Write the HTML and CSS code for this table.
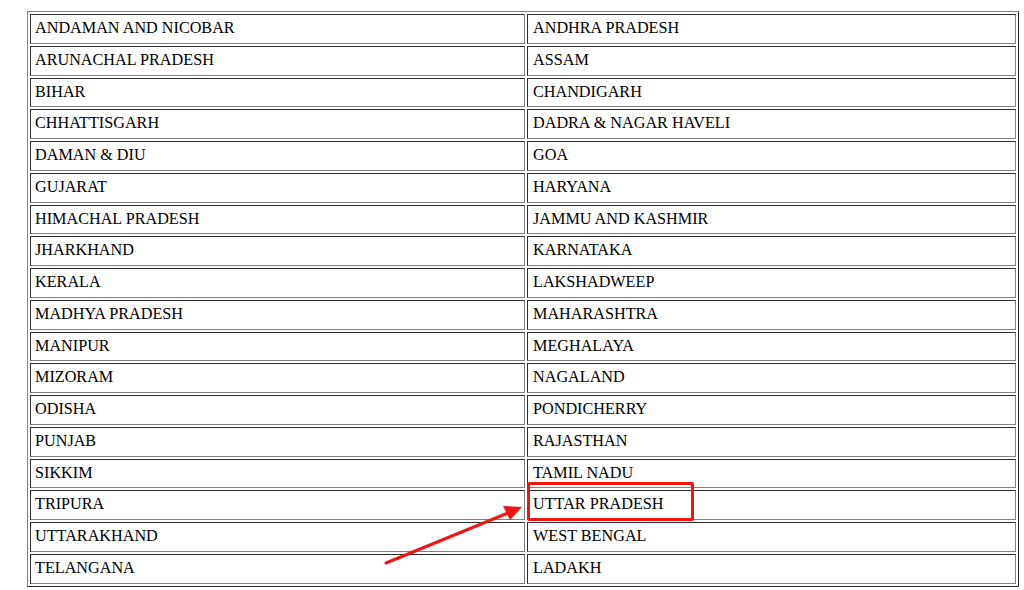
FILE: index.html
```html
<!DOCTYPE html>
<html lang="en">
<head>
  <meta charset="UTF-8" />
  <title>States</title>
  <link rel="stylesheet" href="styles.css">
</head>
<body>
  <div class="wrap">
    <table class="states">
      <tr><td>ANDAMAN AND NICOBAR</td><td>ANDHRA PRADESH</td></tr>
      <tr><td>ARUNACHAL PRADESH</td><td>ASSAM</td></tr>
      <tr><td>BIHAR</td><td>CHANDIGARH</td></tr>
      <tr><td>CHHATTISGARH</td><td>DADRA &amp; NAGAR HAVELI</td></tr>
      <tr><td>DAMAN &amp; DIU</td><td>GOA</td></tr>
      <tr><td>GUJARAT</td><td>HARYANA</td></tr>
      <tr><td>HIMACHAL PRADESH</td><td>JAMMU AND KASHMIR</td></tr>
      <tr><td>JHARKHAND</td><td>KARNATAKA</td></tr>
      <tr><td>KERALA</td><td>LAKSHADWEEP</td></tr>
      <tr><td>MADHYA PRADESH</td><td>MAHARASHTRA</td></tr>
      <tr><td>MANIPUR</td><td>MEGHALAYA</td></tr>
      <tr><td>MIZORAM</td><td>NAGALAND</td></tr>
      <tr><td>ODISHA</td><td>PONDICHERRY</td></tr>
      <tr><td>PUNJAB</td><td>RAJASTHAN</td></tr>
      <tr><td>SIKKIM</td><td>TAMIL NADU</td></tr>
      <tr><td>TRIPURA</td><td>UTTAR PRADESH</td></tr>
      <tr><td>UTTARAKHAND</td><td>WEST BENGAL</td></tr>
      <tr><td>TELANGANA</td><td>LADAKH</td></tr>
    </table>

    <!-- annotation -->
    <div class="highlight"></div>
    <svg class="arrow" width="1024" height="590" viewBox="0 0 1024 590">
      <line x1="386" y1="563" x2="508" y2="513" stroke="#f01414" stroke-width="3" stroke-linecap="round" />
      <polygon points="522,507 503,506 510,520" fill="#f01414" />
    </svg>
  </div>
</body>
</html>
```

FILE: styles.css
```css
body {
  margin: 0;
  background: #fff;
  font-family: "Liberation Serif", "Times New Roman", serif;
  color: #000;
}

.wrap {
  position: relative;
  width: 1024px;
  height: 590px;
  padding: 11px 0 0 27px;
  box-sizing: border-box;
}

.states {
  width: 992px;
  border: 1px outset #808080;
  border-spacing: 2px;
  table-layout: fixed;
  font-size: 16.2px;
}

.states td {
  border: 1px inset #808080;
  padding: 4px 4px;
  line-height: 19.76px;
  white-space: nowrap;
  vertical-align: middle;
}

.states td:first-child {
  width: 485px;
}

.states td + td {
  padding-left: 5px;
}

/* red box around Uttar Pradesh */
.highlight {
  position: absolute;
  left: 527px;
  top: 482px;
  width: 167px;
  height: 39px;
  box-sizing: border-box;
  border: 3px solid #f01414;
  border-radius: 2px;
}

.arrow {
  position: absolute;
  left: 0;
  top: 0;
}
```
